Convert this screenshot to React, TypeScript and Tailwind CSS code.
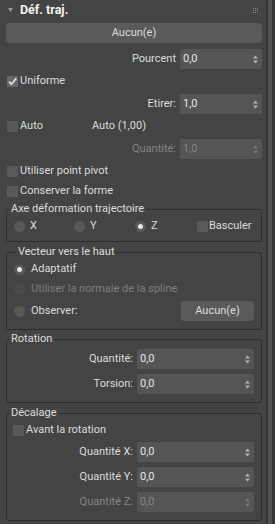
import React from "react";

function Check({ checked }: { checked?: boolean }) {
  return (
    <span
      className={
        "w-[11px] h-[11px] flex items-center justify-center shrink-0 " +
        (checked ? "bg-[#676767]" : "bg-[#595959]")
      }
    >
      {checked && (
        <svg width="9" height="9" viewBox="0 0 9 9">
          <path d="M1 4.6 L3.4 7.2 L8.2 1.4" stroke="#dedede" strokeWidth="1.7" fill="none" />
        </svg>
      )}
    </span>
  );
}

function Radio({ on, disabled }: { on?: boolean; disabled?: boolean }) {
  return (
    <span
      className={
        "w-[11px] h-[11px] rounded-full flex items-center justify-center shrink-0 " +
        (disabled ? "bg-[#4b4b4b]" : "bg-[#585858]")
      }
    >
      {on && <span className="w-[5px] h-[5px] rounded-full bg-[#e8e8e8]" />}
    </span>
  );
}

function Arrows({ disabled }: { disabled?: boolean }) {
  const c = disabled ? "#7a7a7a" : "#b4b4b4";
  return (
    <svg width="5" height="9" viewBox="0 0 5 9" className="shrink-0">
      <path d="M0 3.5 L2.5 0.5 L5 3.5 Z" fill={c} />
      <path d="M0 5.5 L2.5 8.5 L5 5.5 Z" fill={c} />
    </svg>
  );
}

function Spin({ value, disabled, w }: { value: string; disabled?: boolean; w: string }) {
  return (
    <div className={"h-[20px] bg-[#555555] rounded-[2px] flex items-center pl-[3px] pr-[4px] " + w}>
      <span className={"flex-1 " + (disabled ? "text-[#858585]" : "text-[#e6e6e6]")}>{value}</span>
      <Arrows disabled={disabled} />
    </div>
  );
}

function LabeledSpin({
  label,
  value,
  disabled,
  w,
}: {
  label: string;
  value: string;
  disabled?: boolean;
  w: string;
}) {
  return (
    <div className="flex items-center justify-end gap-[4px]">
      <span className={disabled ? "text-[#858585]" : "text-[#dcdcdc]"}>{label}</span>
      <Spin value={value} disabled={disabled} w={w} />
    </div>
  );
}

function CheckRow({ label, checked }: { label: string; checked?: boolean }) {
  return (
    <div className="h-[16px] flex items-center gap-[2px]">
      <Check checked={checked} />
      <span>{label}</span>
    </div>
  );
}

function Group({ title, children, cls }: { title: string; children: React.ReactNode; cls: string }) {
  return (
    <fieldset className={"border border-[#2e2e2e] rounded-[3px] " + cls}>
      <legend className="ml-[2px] px-[2px] leading-[14px] text-[#dcdcdc]">{title}</legend>
      {children}
    </fieldset>
  );
}

export default function App() {
  return (
    <div className="w-[275px] h-[524px] flex bg-[#444444] [font-family:Roboto,'Liberation_Sans',sans-serif] text-[11px] leading-[14px] text-[#dcdcdc] overflow-hidden">
      <div className="w-[266px] h-full flex flex-col pl-[6px] pr-[4px]">
        {/* header */}
        <div className="h-[20px] flex items-center pl-[2px]">
          <svg width="5" height="4" viewBox="0 0 5 4" className="mr-[7px]">
            <path d="M0 0 L5 0 L2.5 4 Z" fill="#9a9a9a" />
          </svg>
          <span className="text-[12.5px] font-bold text-[#f2f2f2]">Déf. traj.</span>
          <div className="ml-auto mr-[4px] grid grid-cols-3 gap-[1px]">
            {Array.from({ length: 9 }).map((_, i) => (
              <span key={i} className="w-[1px] h-[1px] bg-[#8c8c8c]" />
            ))}
          </div>
        </div>

        <div className="mt-[3px] h-[20px] w-[256px] bg-[#5a5a5a] rounded-[3px] flex items-center justify-center text-[#dcdcdc]">
          Aucun(e)
        </div>

        <div className="mt-[6px] w-[256px]">
          <LabeledSpin label="Pourcent" value="0,0" w="w-[82px]" />
        </div>

        <div className="mt-[4px] pl-[1px]">
          <CheckRow label="Uniforme" checked />
        </div>

        <div className="mt-[5px] w-[256px]">
          <LabeledSpin label="Etirer:" value="1,0" w="w-[82px]" />
        </div>

        <div className="mt-[4px] pl-[1px] h-[16px] flex items-center">
          <div className="w-[85px] flex items-center gap-[2px]">
            <Check />
            <span>Auto</span>
          </div>
          <span>Auto (1,00)</span>
        </div>

        <div className="mt-[5px] w-[256px]">
          <LabeledSpin label="Quantité:" value="1,0" disabled w="w-[82px]" />
        </div>

        <div className="mt-[4px] pl-[1px]">
          <CheckRow label="Utiliser point pivot" />
        </div>
        <div className="mt-[4px] pl-[1px]">
          <CheckRow label="Conserver la forme" />
        </div>

        <Group title="Axe déformation trajectoire" cls="mt-[3px] w-[256px] pb-[7px]">
          <div className="mt-[2px] h-[16px] flex items-center pl-[7px]">
            <div className="w-[60px] flex items-center gap-[5px]">
              <Radio />
              <span>X</span>
            </div>
            <div className="w-[61px] flex items-center gap-[5px]">
              <Radio />
              <span>Y</span>
            </div>
            <div className="w-[62px] flex items-center gap-[5px]">
              <Radio on />
              <span>Z</span>
            </div>
            <div className="flex items-center gap-[1px]">
              <Check />
              <span>Basculer</span>
            </div>
          </div>
        </Group>

        <Group title="Vecteur vers le haut" cls="mt-[3px] w-[256px] pb-[8px] pl-[7px] pr-[7px]">
          <div className="mt-[2px] h-[16px] flex items-center gap-[6px]">
            <Radio on />
            <span>Adaptatif</span>
          </div>
          <div className="mt-[4px] h-[16px] flex items-center gap-[6px]">
            <Radio disabled />
            <span className="text-[#7f7f7f]">Utiliser la normale de la spline</span>
          </div>
          <div className="mt-[4px] h-[20px] flex items-center gap-[6px]">
            <Radio />
            <span>Observer:</span>
            <div className="ml-auto w-[73px] h-[20px] bg-[#5a5a5a] rounded-[3px] flex items-center justify-center">
              Aucun(e)
            </div>
          </div>
        </Group>

        <Group title="Rotation" cls="mt-[2px] w-[256px] pb-[8px] pr-[7px]">
          <div className="mt-[3px]">
            <LabeledSpin label="Quantité:" value="0,0" w="w-[117px]" />
          </div>
          <div className="mt-[5px]">
            <LabeledSpin label="Torsion:" value="0,0" w="w-[117px]" />
          </div>
        </Group>

        <Group title="Décalage" cls="mt-[3px] w-[256px] pb-[8px] pr-[7px]">
          <div className="mt-[2px] pl-[6px]">
            <CheckRow label="Avant la rotation" />
          </div>
          <div className="mt-[4px]">
            <LabeledSpin label="Quantité X:" value="0,0" w="w-[117px]" />
          </div>
          <div className="mt-[5px]">
            <LabeledSpin label="Quantité Y:" value="0,0" w="w-[117px]" />
          </div>
          <div className="mt-[5px]">
            <LabeledSpin label="Quantité Z:" value="0,0" disabled w="w-[117px]" />
          </div>
        </Group>
      </div>
      <div className="w-[9px] h-full bg-[#353535] flex pl-[2px]">
        <div className="w-[4px] h-full bg-[#525252]" />
      </div>
    </div>
  );
}
